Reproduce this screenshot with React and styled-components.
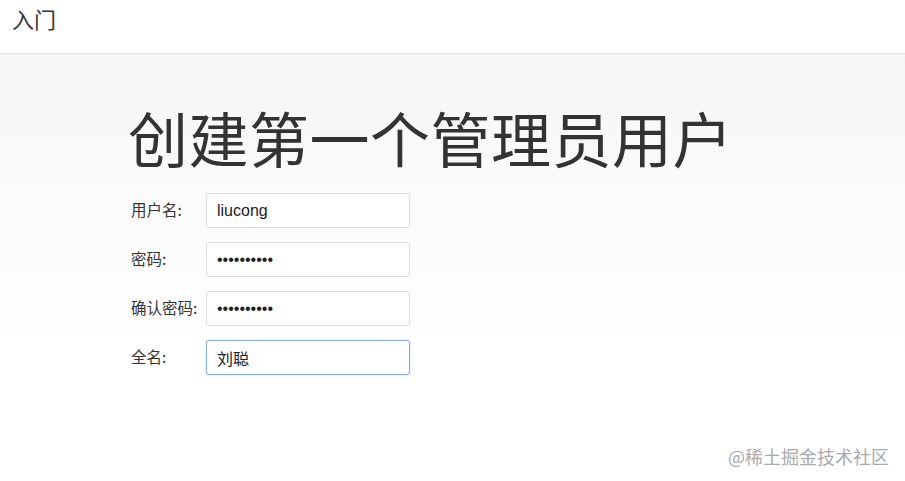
import React from "react";
import styled, { createGlobalStyle } from "styled-components";

const GlobalStyle = createGlobalStyle`
  html, body {
    margin: 0;
    padding: 0;
    height: 100%;
  }
  body {
    font-family: "Liberation Sans", "Noto Sans CJK SC", sans-serif;
    color: #333;
    background: #fff;
  }
`;

const Page = styled.div`
  position: relative;
  min-height: 100vh;
  display: flex;
  flex-direction: column;
`;

const Header = styled.header`
  height: 53px;
  border-bottom: 1px solid #e2e2e2;
  background: #fff;
  display: flex;
  align-items: center;
  padding: 0 12px;
  flex-shrink: 0;
`;

const HeaderTitle = styled.h1`
  margin: -17px 0 0;
  font-family: "Noto Sans CJK SC", sans-serif;
  font-weight: 400;
  font-size: 22px;
  line-height: 1;
  color: #333;
`;

const Body = styled.main`
  flex: 1;
  background: linear-gradient(to bottom, #f5f5f5 0px, #fafafa 120px, #fff 300px);
  padding: 44px 0 0 128px;
`;

const Title = styled.h2`
  margin: 0 0 17px;
  font-family: "Noto Sans CJK SC", sans-serif;
  font-weight: 400;
  font-size: 60px;
  line-height: 78px;
  color: #333;
  letter-spacing: 0.5px;
`;

const Form = styled.form`
  display: flex;
  flex-direction: column;
  gap: 14px;
`;

const Row = styled.div`
  display: flex;
  align-items: center;
`;

const Label = styled.label`
  width: 78px;
  padding: 0 0 4px 3px;
  box-sizing: border-box;
  font-family: "Noto Sans CJK SC", sans-serif;
  font-size: 15.5px;
  color: #333;
`;

const Input = styled.input`
  width: 204px;
  height: 35px;
  box-sizing: border-box;
  padding: 0 10px;
  font-family: "Liberation Sans", "Noto Sans CJK SC", sans-serif;
  font-size: 16px;
  color: #222;
  background: #fff;
  border: 1px solid ${(p) => (p.$focused ? "#8aaedb" : "#dcdcdc")};
  border-radius: 3px;
  outline: none;
  box-shadow: ${(p) =>
    p.$focused ? "0 0 3px rgba(110, 150, 210, 0.35)" : "none"};
`;

const Watermark = styled.div`
  position: absolute;
  right: 16px;
  bottom: 16px;
  font-family: "Noto Sans CJK SC", sans-serif;
  font-size: 18px;
  line-height: 1;
  color: #aaa;
`;

const fields = [
  { label: "用户名:", type: "text", value: "liucong" },
  { label: "密码:", type: "password", value: "0123456789" },
  { label: "确认密码:", type: "password", value: "0123456789" },
  { label: "全名:", type: "text", value: "刘聪", focused: true },
];

export default function App() {
  return (
    <>
      <GlobalStyle />
      <Page>
        <Header>
          <HeaderTitle>入门</HeaderTitle>
        </Header>
        <Body>
          <Title>创建第一个管理员用户</Title>
          <Form onSubmit={(e) => e.preventDefault()}>
            {fields.map((f, i) => (
              <Row key={i}>
                <Label>{f.label}</Label>
                <Input
                  type={f.type}
                  defaultValue={f.value}
                  $focused={f.focused}
                  readOnly
                />
              </Row>
            ))}
          </Form>
        </Body>
        <Watermark>@稀土掘金技术社区</Watermark>
      </Page>
    </>
  );
}
